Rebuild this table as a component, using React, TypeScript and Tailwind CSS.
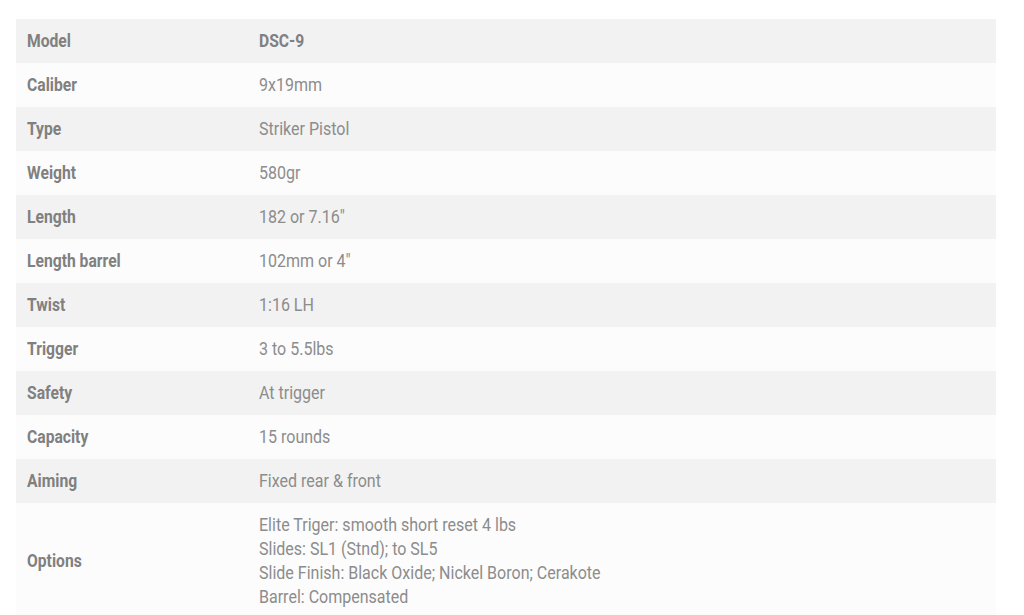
const rows: [string, string[]][] = [
  ["Model", ["DSC-9"]],
  ["Caliber", ["9x19mm"]],
  ["Type", ["Striker Pistol"]],
  ["Weight", ["580gr"]],
  ["Length", ["182 or 7.16\""]],
  ["Length barrel", ["102mm or 4\""]],
  ["Twist", ["1:16 LH"]],
  ["Trigger", ["3 to 5.5lbs"]],
  ["Safety", ["At trigger"]],
  ["Capacity", ["15 rounds"]],
  ["Aiming", ["Fixed rear & front"]],
  [
    "Options",
    [
      "Elite Triger: smooth short reset 4 lbs",
      "Slides: SL1 (Stnd); to SL5",
      "Slide Finish: Black Oxide; Nickel Boron; Cerakote",
      "Barrel: Compensated",
    ],
  ],
];

export default function App() {
  return (
    <div className="min-h-screen bg-white pl-4 pr-[28px] pt-[19px] font-['Roboto',sans-serif] text-[18px] leading-6">
      <div className="flex flex-col">
        {rows.map(([k, v], i) => (
          <div
            key={k}
            className={`flex items-center ${i % 2 === 0 ? "bg-[#f2f2f2]" : "bg-[#fcfcfc]"}`}
          >
            <div className="w-[232px] shrink-0 px-[11px] py-[10px] font-bold text-[#808080]">
              <span className="inline-block origin-left scale-x-[0.87] whitespace-nowrap">{k}</span>
            </div>
            <div className="px-[11px] py-[10px] text-[#8c8c8c]">
              {i === 0 ? (
                <div className="origin-left scale-x-[0.87] whitespace-nowrap font-bold text-[#808080]">
                  {v[0]}
                </div>
              ) : (
                v.map((line) => (
                  <div key={line} className="origin-left scale-x-[0.89] whitespace-nowrap">
                    {line}
                  </div>
                ))
              )}
            </div>
          </div>
        ))}
      </div>
    </div>
  );
}
